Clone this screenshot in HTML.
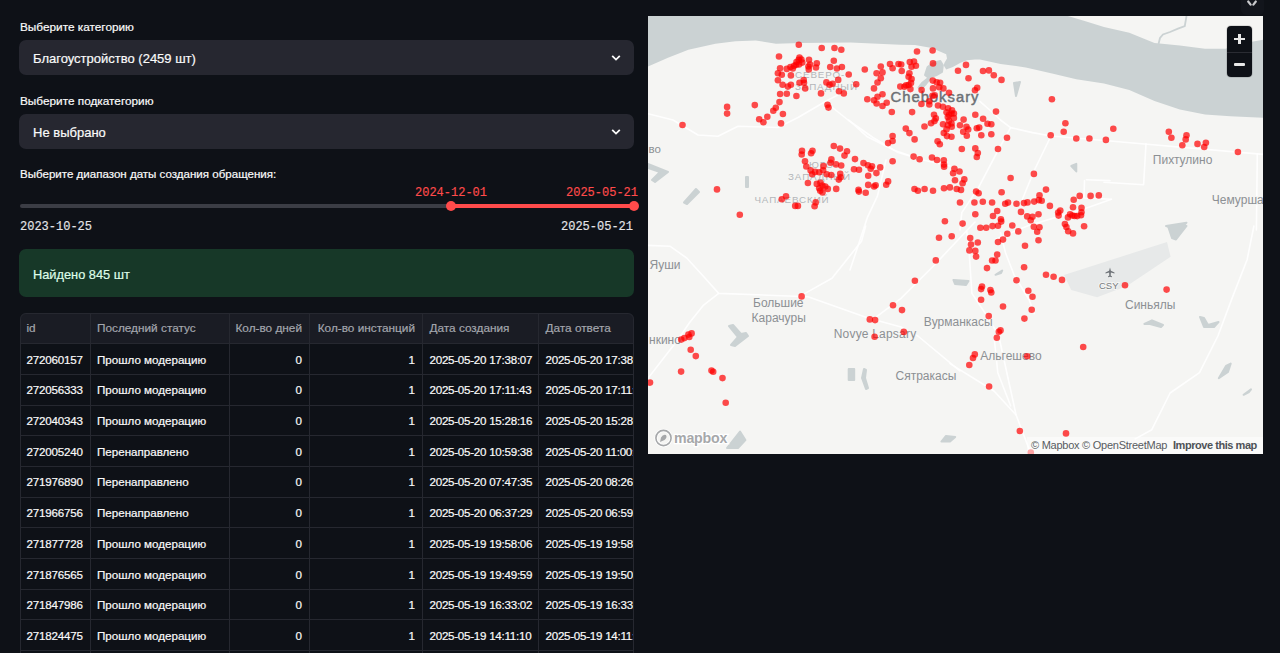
<!DOCTYPE html>
<html><head><meta charset="utf-8">
<style>
html,body{margin:0;padding:0;width:1280px;height:653px;overflow:hidden;background:#0e1117;}
body{position:relative;font-family:"Liberation Sans",sans-serif;color:#fafafa;}
.lbl,.sel .t,.ok .t,.td,.th{-webkit-text-stroke:0.2px currentColor;}
.abs{position:absolute;white-space:nowrap;}
.lbl{font-size:11.8px;line-height:14px;color:#fafafa;}
.sel{position:absolute;left:19px;width:615px;height:35px;background:#262730;border-radius:7px;}
.sel .t{position:absolute;left:14px;top:1px;line-height:35px;font-size:13px;color:#fafafa;}
.sel svg{position:absolute;left:591.8px;top:14px;}
.mono{font-family:"Liberation Mono",monospace;font-size:12px;line-height:14px;-webkit-text-stroke:0.15px currentColor;}
.ok{position:absolute;left:19px;top:249px;width:615px;height:48px;background:#173828;border-radius:7px;}
.ok .t{position:absolute;left:14px;top:2px;line-height:48px;font-size:12.8px;color:#dffde9;}
.tbl{position:absolute;left:19.5px;top:312.5px;width:614px;height:360px;border-radius:6px;overflow:hidden;background:#0e1117;box-shadow:inset 0 0 0 1px #262830;}
.th{font-size:11.8px;line-height:31px;color:#a3a6ad;}
.td{font-size:11.6px;line-height:31px;color:#fafafa;}
.map{position:absolute;left:648px;top:16px;width:615px;height:438px;background:#f4f4f2;overflow:hidden;}
</style></head><body>
<div class="abs lbl" style="left:20px;top:20px">Выберите категорию</div>
<div class="sel" style="top:40px"><div class="t abs">Благоустройство (2459 шт)</div>
<svg width="10" height="8" viewBox="0 0 10 8"><path d="M1.2 1.8 L5 5.6 L8.8 1.8" stroke="#fafafa" stroke-width="1.8" fill="none"/></svg></div>
<div class="abs lbl" style="left:20px;top:94px">Выберите подкатегорию</div>
<div class="sel" style="top:114px"><div class="t abs">Не выбрано</div>
<svg width="10" height="8" viewBox="0 0 10 8"><path d="M1.2 1.8 L5 5.6 L8.8 1.8" stroke="#fafafa" stroke-width="1.8" fill="none"/></svg></div>
<div class="abs lbl" style="left:20px;top:167px;font-size:11.55px">Выберите диапазон даты создания обращения:</div>

<div class="abs" style="left:20px;top:204px;width:614px;height:4px;background:#3b3d45;border-radius:2px"></div>
<div class="abs" style="left:451px;top:204px;width:183px;height:4px;background:#ff4b4b"></div>
<div class="abs" style="left:445.5px;top:200.7px;width:10.5px;height:10.5px;border-radius:50%;background:#ff4b4b"></div>
<div class="abs" style="left:628.9px;top:200.7px;width:10.5px;height:10.5px;border-radius:50%;background:#ff4b4b"></div>
<div class="abs mono" style="left:415px;top:186px;color:#ff4b4b">2024-12-01</div>
<div class="abs mono" style="left:566px;top:186px;color:#ff4b4b">2025-05-21</div>
<div class="abs mono" style="left:20px;top:220px;color:#e4e4e8">2023-10-25</div>
<div class="abs mono" style="left:561px;top:220px;color:#e4e4e8">2025-05-21</div>

<div class="ok"><div class="t abs">Найдено 845 шт</div></div>

<div class="abs" style="left:1241px;top:-4px;width:23px;height:19px;background:#12151c;border-radius:5px"></div>
<svg class="abs" style="left:1246px;top:0" width="12" height="7" viewBox="0 0 12 7"><path d="M2.2 1.5 L4.6 4.6 M9.8 1.5 L7.4 4.6" stroke="#c9cacd" stroke-width="2.2" stroke-linecap="round"/></svg>
<div class="tbl">
<div class="abs" style="left:0;top:0;width:620px;height:31.1px;background:#1a1c24"></div>
<div class="abs" style="left:70.0px;top:0;width:1px;height:400px;background:#262830"></div>
<div class="abs" style="left:209.0px;top:0;width:1px;height:400px;background:#262830"></div>
<div class="abs" style="left:289.5px;top:0;width:1px;height:400px;background:#262830"></div>
<div class="abs" style="left:402.5px;top:0;width:1px;height:400px;background:#262830"></div>
<div class="abs" style="left:518.5px;top:0;width:1px;height:400px;background:#262830"></div>
<div class="abs" style="left:0;top:30.6px;width:620px;height:1px;background:#262830"></div>
<div class="abs" style="left:0;top:61.3px;width:620px;height:1px;background:#262830"></div>
<div class="abs" style="left:0;top:92.0px;width:620px;height:1px;background:#262830"></div>
<div class="abs" style="left:0;top:122.7px;width:620px;height:1px;background:#262830"></div>
<div class="abs" style="left:0;top:153.4px;width:620px;height:1px;background:#262830"></div>
<div class="abs" style="left:0;top:184.1px;width:620px;height:1px;background:#262830"></div>
<div class="abs" style="left:0;top:214.8px;width:620px;height:1px;background:#262830"></div>
<div class="abs" style="left:0;top:245.5px;width:620px;height:1px;background:#262830"></div>
<div class="abs" style="left:0;top:276.2px;width:620px;height:1px;background:#262830"></div>
<div class="abs" style="left:0;top:306.9px;width:620px;height:1px;background:#262830"></div>
<div class="abs" style="left:0;top:337.6px;width:620px;height:1px;background:#262830"></div>
<div class="abs th" style="left:7.0px;top:0.0px">id</div>
<div class="abs th" style="left:77.5px;top:0.0px">Последний статус</div>
<div class="abs th" style="left:209.5px;width:73.0px;text-align:right;top:0.0px">Кол-во дней</div>
<div class="abs th" style="left:290.0px;width:105.5px;text-align:right;top:0.0px">Кол-во инстанций</div>
<div class="abs th" style="left:410.0px;top:0.0px">Дата создания</div>
<div class="abs th" style="left:526.0px;top:0.0px">Дата ответа</div>
<div class="abs td" style="left:7.0px;top:31.1px;letter-spacing:-0.2px">272060157</div>
<div class="abs td" style="left:77.5px;top:31.1px">Прошло модерацию</div>
<div class="abs td" style="left:209.5px;width:73.0px;text-align:right;top:31.1px">0</div>
<div class="abs td" style="left:290.0px;width:105.5px;text-align:right;top:31.1px">1</div>
<div class="abs td" style="left:410.0px;top:31.1px;letter-spacing:-0.26px">2025-05-20 17:38:07</div>
<div class="abs td" style="left:526.0px;top:31.1px;letter-spacing:-0.26px">2025-05-20 17:38:09</div>
<div class="abs td" style="left:7.0px;top:61.8px;letter-spacing:-0.2px">272056333</div>
<div class="abs td" style="left:77.5px;top:61.8px">Прошло модерацию</div>
<div class="abs td" style="left:209.5px;width:73.0px;text-align:right;top:61.8px">0</div>
<div class="abs td" style="left:290.0px;width:105.5px;text-align:right;top:61.8px">1</div>
<div class="abs td" style="left:410.0px;top:61.8px;letter-spacing:-0.26px">2025-05-20 17:11:43</div>
<div class="abs td" style="left:526.0px;top:61.8px;letter-spacing:-0.26px">2025-05-20 17:11:45</div>
<div class="abs td" style="left:7.0px;top:92.5px;letter-spacing:-0.2px">272040343</div>
<div class="abs td" style="left:77.5px;top:92.5px">Прошло модерацию</div>
<div class="abs td" style="left:209.5px;width:73.0px;text-align:right;top:92.5px">0</div>
<div class="abs td" style="left:290.0px;width:105.5px;text-align:right;top:92.5px">1</div>
<div class="abs td" style="left:410.0px;top:92.5px;letter-spacing:-0.26px">2025-05-20 15:28:16</div>
<div class="abs td" style="left:526.0px;top:92.5px;letter-spacing:-0.26px">2025-05-20 15:28:18</div>
<div class="abs td" style="left:7.0px;top:123.2px;letter-spacing:-0.2px">272005240</div>
<div class="abs td" style="left:77.5px;top:123.2px">Перенаправлено</div>
<div class="abs td" style="left:209.5px;width:73.0px;text-align:right;top:123.2px">0</div>
<div class="abs td" style="left:290.0px;width:105.5px;text-align:right;top:123.2px">1</div>
<div class="abs td" style="left:410.0px;top:123.2px;letter-spacing:-0.26px">2025-05-20 10:59:38</div>
<div class="abs td" style="left:526.0px;top:123.2px;letter-spacing:-0.26px">2025-05-20 11:00:12</div>
<div class="abs td" style="left:7.0px;top:153.9px;letter-spacing:-0.2px">271976890</div>
<div class="abs td" style="left:77.5px;top:153.9px">Перенаправлено</div>
<div class="abs td" style="left:209.5px;width:73.0px;text-align:right;top:153.9px">0</div>
<div class="abs td" style="left:290.0px;width:105.5px;text-align:right;top:153.9px">1</div>
<div class="abs td" style="left:410.0px;top:153.9px;letter-spacing:-0.26px">2025-05-20 07:47:35</div>
<div class="abs td" style="left:526.0px;top:153.9px;letter-spacing:-0.26px">2025-05-20 08:26:40</div>
<div class="abs td" style="left:7.0px;top:184.6px;letter-spacing:-0.2px">271966756</div>
<div class="abs td" style="left:77.5px;top:184.6px">Перенаправлено</div>
<div class="abs td" style="left:209.5px;width:73.0px;text-align:right;top:184.6px">0</div>
<div class="abs td" style="left:290.0px;width:105.5px;text-align:right;top:184.6px">1</div>
<div class="abs td" style="left:410.0px;top:184.6px;letter-spacing:-0.26px">2025-05-20 06:37:29</div>
<div class="abs td" style="left:526.0px;top:184.6px;letter-spacing:-0.26px">2025-05-20 06:59:11</div>
<div class="abs td" style="left:7.0px;top:215.3px;letter-spacing:-0.2px">271877728</div>
<div class="abs td" style="left:77.5px;top:215.3px">Прошло модерацию</div>
<div class="abs td" style="left:209.5px;width:73.0px;text-align:right;top:215.3px">0</div>
<div class="abs td" style="left:290.0px;width:105.5px;text-align:right;top:215.3px">1</div>
<div class="abs td" style="left:410.0px;top:215.3px;letter-spacing:-0.26px">2025-05-19 19:58:06</div>
<div class="abs td" style="left:526.0px;top:215.3px;letter-spacing:-0.26px">2025-05-19 19:58:08</div>
<div class="abs td" style="left:7.0px;top:246.0px;letter-spacing:-0.2px">271876565</div>
<div class="abs td" style="left:77.5px;top:246.0px">Прошло модерацию</div>
<div class="abs td" style="left:209.5px;width:73.0px;text-align:right;top:246.0px">0</div>
<div class="abs td" style="left:290.0px;width:105.5px;text-align:right;top:246.0px">1</div>
<div class="abs td" style="left:410.0px;top:246.0px;letter-spacing:-0.26px">2025-05-19 19:49:59</div>
<div class="abs td" style="left:526.0px;top:246.0px;letter-spacing:-0.26px">2025-05-19 19:50:01</div>
<div class="abs td" style="left:7.0px;top:276.7px;letter-spacing:-0.2px">271847986</div>
<div class="abs td" style="left:77.5px;top:276.7px">Прошло модерацию</div>
<div class="abs td" style="left:209.5px;width:73.0px;text-align:right;top:276.7px">0</div>
<div class="abs td" style="left:290.0px;width:105.5px;text-align:right;top:276.7px">1</div>
<div class="abs td" style="left:410.0px;top:276.7px;letter-spacing:-0.26px">2025-05-19 16:33:02</div>
<div class="abs td" style="left:526.0px;top:276.7px;letter-spacing:-0.26px">2025-05-19 16:33:04</div>
<div class="abs td" style="left:7.0px;top:307.4px;letter-spacing:-0.2px">271824475</div>
<div class="abs td" style="left:77.5px;top:307.4px">Прошло модерацию</div>
<div class="abs td" style="left:209.5px;width:73.0px;text-align:right;top:307.4px">0</div>
<div class="abs td" style="left:290.0px;width:105.5px;text-align:right;top:307.4px">1</div>
<div class="abs td" style="left:410.0px;top:307.4px;letter-spacing:-0.26px">2025-05-19 14:11:10</div>
<div class="abs td" style="left:526.0px;top:307.4px;letter-spacing:-0.26px">2025-05-19 14:11:12</div>
<div class="abs td" style="left:7.0px;top:338.1px;letter-spacing:-0.2px">271811021</div>
<div class="abs td" style="left:77.5px;top:338.1px">Прошло модерацию</div>
<div class="abs td" style="left:209.5px;width:73.0px;text-align:right;top:338.1px">0</div>
<div class="abs td" style="left:290.0px;width:105.5px;text-align:right;top:338.1px">1</div>
<div class="abs td" style="left:410.0px;top:338.1px;letter-spacing:-0.26px">2025-05-19 12:01:10</div>
<div class="abs td" style="left:526.0px;top:338.1px;letter-spacing:-0.26px">2025-05-19 12:01:12</div>
<div class="abs" style="left:0;top:0;width:614px;height:360px;box-sizing:border-box;border:1px solid #262830;border-radius:6px"></div>
</div>
<div class="map" id="map"><svg class="abs" style="left:0;top:0" width="615" height="438" viewBox="648 16 615 438">
<rect x="648" y="16" width="615" height="438" fill="#f5f5f3"/>
<polygon points="1064,275 1167,242 1170.6,256.8 1126.5,286.2 1097,297.2 1071.3,289.9" fill="#e7e9e9"/>
<polygon points="648,16 1067.9,16 1084.7,21 1104,27 1129.3,32.8 1154.5,43 1179.8,45.5 1205,48.8 1225.3,48.8 1250.5,42 1264,39.6 1264,117.9 1230.3,116.2 1205,114.5 1179.8,109.5 1154.5,101 1129.3,90 1104,83.4 1076.3,79.2 1051,73.2 1025.8,67.4 1000.5,64 980,59.5 975,59.4 967,60.2 960.5,62.7 952.9,67 946.2,69.5 943.6,65.3 944.5,62.7 947,58.5 946.2,54.3 931.8,48 915,45 900,44.8 850.5,42.6 800,43 776,43.8 755.8,40.4 735.6,41.3 715.4,43.8 688.4,49.7 668,57.8 648,66.5" fill="#cbd2d3"/>
<polygon points="940.3,61 942.8,65.3 942,72 936,75.4 929,77.5 922,83 918.5,87.5 920.5,89.5 926,84 930,79 925,75 927.6,67 933.5,62.7" fill="#cbd2d3" stroke="#cbd2d3" stroke-width="2" stroke-linejoin="round"/>
<polygon points="648,164 668,172 655,182 652,180 660,172 648,168" fill="#cbd2d3" stroke="#cbd2d3" stroke-width="2" stroke-linejoin="round"/>
<polygon points="684,202.5 696,189 699,192 687,204" fill="#cbd2d3" stroke="#cbd2d3" stroke-width="2" stroke-linejoin="round"/>
<polygon points="746,177 748,177 748,187 746,187" fill="#cbd2d3" stroke="#cbd2d3" stroke-width="2" stroke-linejoin="round"/>
<polygon points="1014,83 1020,82 1016,96" fill="#cbd2d3" stroke="#cbd2d3" stroke-width="2" stroke-linejoin="round"/>
<polygon points="1071.3,166 1076.3,163.8 1076.3,171.4" fill="#cbd2d3" stroke="#cbd2d3" stroke-width="2" stroke-linejoin="round"/>
<polygon points="1166,226 1186.5,222.7 1180,230" fill="#cbd2d3" stroke="#cbd2d3" stroke-width="2" stroke-linejoin="round"/>
<polygon points="1168,226 1186.5,226 1176,239.5 1172,238" fill="#cbd2d3" stroke="#cbd2d3" stroke-width="2" stroke-linejoin="round"/>
<polygon points="953.4,280 968.5,281 966,285 955,284" fill="#cbd2d3" stroke="#cbd2d3" stroke-width="2" stroke-linejoin="round"/>
<polygon points="995.5,274.8 1002.2,270.6 1001,273" fill="#cbd2d3" stroke="#cbd2d3" stroke-width="2" stroke-linejoin="round"/>
<polygon points="1200,317 1204,318 1208,325 1218.5,322 1214,327 1204,327" fill="#cbd2d3" stroke="#cbd2d3" stroke-width="2" stroke-linejoin="round"/>
<polygon points="1144.4,324 1152,320.3 1163,325 1161,327 1150,324" fill="#cbd2d3" stroke="#cbd2d3" stroke-width="2" stroke-linejoin="round"/>
<polygon points="729,326 733,325 741,334 746,333 748,336 735,346 731,345 738,337" fill="#cbd2d3" stroke="#cbd2d3" stroke-width="2" stroke-linejoin="round"/>
<polygon points="727,448 740,431.5 745.4,440 738,448" fill="#cbd2d3" stroke="#cbd2d3" stroke-width="2" stroke-linejoin="round"/>
<polygon points="848.7,369 854.2,369 854.2,380 848.7,380" fill="#cbd2d3" stroke="#cbd2d3" stroke-width="2" stroke-linejoin="round"/>
<polygon points="864,369 862,378 866,389 868,388 865,378 866,370" fill="#cbd2d3" stroke="#cbd2d3" stroke-width="2" stroke-linejoin="round"/>
<polygon points="941.4,441.6 946,436 955.2,437 950,441.6" fill="#cbd2d3" stroke="#cbd2d3" stroke-width="2" stroke-linejoin="round"/>
<polygon points="1218.8,378.2 1226,366 1230.7,363.6 1228,372" fill="#cbd2d3" stroke="#cbd2d3" stroke-width="2" stroke-linejoin="round"/>
<polygon points="1243.6,394.8 1251,389.3 1249,392" fill="#cbd2d3" stroke="#cbd2d3" stroke-width="2" stroke-linejoin="round"/>
<polyline points="1158.5,44 1160,38 1163,34.5 1170,32 1178,28.6 1184.8,26 1186.5,16" fill="none" stroke="#cbd2d3" stroke-width="1.8"/>
<polyline points="648,113.75 673,120 698,135 718,136.25 738,126.25 778,127.5 798,117.5 828,100 838,95" fill="none" stroke="#ffffff" stroke-width="1.6" stroke-opacity="0.9" stroke-linejoin="round" stroke-linecap="round"/>
<polyline points="828,104 848,120 873,137.5 898,152.5 923,160 950,166" fill="none" stroke="#ffffff" stroke-width="1.6" stroke-opacity="0.9" stroke-linejoin="round" stroke-linecap="round"/>
<polyline points="886,160 877.5,195.8 867.3,217.7 860,240 850,270" fill="none" stroke="#ffffff" stroke-width="1.6" stroke-opacity="0.9" stroke-linejoin="round" stroke-linecap="round"/>
<polyline points="848.8,120 867.3,136.8 894.3,150.3 909.5,155.4" fill="none" stroke="#ffffff" stroke-width="1.6" stroke-opacity="0.9" stroke-linejoin="round" stroke-linecap="round"/>
<polyline points="979.9,101.3 992,112 1000.5,120 1010.6,127.6 1032.5,132.6 1051,136 1110,141 1264,154.5" fill="none" stroke="#ffffff" stroke-width="1.6" stroke-opacity="0.9" stroke-linejoin="round" stroke-linecap="round"/>
<polyline points="1010.6,127.6 997.2,152 978.6,187.4 961.8,212.6 960,230" fill="none" stroke="#ffffff" stroke-width="1.6" stroke-opacity="0.9" stroke-linejoin="round" stroke-linecap="round"/>
<polyline points="1051,136 1034.2,170.5 1022.4,199.2" fill="none" stroke="#ffffff" stroke-width="1.6" stroke-opacity="0.9" stroke-linejoin="round" stroke-linecap="round"/>
<polyline points="1146,143.6 1143.6,184.8 1104,182.3" fill="none" stroke="#ffffff" stroke-width="1.6" stroke-opacity="0.9" stroke-linejoin="round" stroke-linecap="round"/>
<polyline points="1086.4,179.8 1110,180.6" fill="none" stroke="#ffffff" stroke-width="1.6" stroke-opacity="0.9" stroke-linejoin="round" stroke-linecap="round"/>
<polyline points="1084.5,180.5 1084,198 1111.4,199.2" fill="none" stroke="#ffffff" stroke-width="1.6" stroke-opacity="0.9" stroke-linejoin="round" stroke-linecap="round"/>
<polyline points="995.7,239.2 1028.8,225.4 1083.9,208.9 1111.4,199.2" fill="none" stroke="#ffffff" stroke-width="1.6" stroke-opacity="0.9" stroke-linejoin="round" stroke-linecap="round"/>
<polyline points="1257.3,153.7 1256.4,230" fill="none" stroke="#ffffff" stroke-width="1.6" stroke-opacity="0.9" stroke-linejoin="round" stroke-linecap="round"/>
<polyline points="648,245.4 669.9,246.2 686.7,258 703.6,276.5 718.7,293.4 808,296.7 867.3,317.8 901,327 917.9,336 959.8,370.9" fill="none" stroke="#ffffff" stroke-width="1.6" stroke-opacity="0.9" stroke-linejoin="round" stroke-linecap="round"/>
<polyline points="718.7,293.4 703.6,305.1 690,322 676.5,341.5 648,378.2" fill="none" stroke="#ffffff" stroke-width="1.6" stroke-opacity="0.9" stroke-linejoin="round" stroke-linecap="round"/>
<polyline points="865.7,226 861.5,241.2 832,278.2 805,293.4 800,298.4" fill="none" stroke="#ffffff" stroke-width="1.6" stroke-opacity="0.9" stroke-linejoin="round" stroke-linecap="round"/>
<polyline points="874,318.6 901,298.4 934.7,264.7 960,237.8 975,222" fill="none" stroke="#ffffff" stroke-width="1.6" stroke-opacity="0.9" stroke-linejoin="round" stroke-linecap="round"/>
<polyline points="966.8,231 969.4,256.3 971.9,293.4 988.7,318.6 998.8,336 1016.1,415 1030.8,453.6" fill="none" stroke="#ffffff" stroke-width="1.6" stroke-opacity="0.9" stroke-linejoin="round" stroke-linecap="round"/>
<polyline points="1000.5,232.7 1005.6,253 1014,274.8 1029.2,300 1034.2,313.6" fill="none" stroke="#ffffff" stroke-width="1.6" stroke-opacity="0.9" stroke-linejoin="round" stroke-linecap="round"/>
<polyline points="950,363.6 994,391 1016.1,415" fill="none" stroke="#ffffff" stroke-width="1.6" stroke-opacity="0.9" stroke-linejoin="round" stroke-linecap="round"/>
<polyline points="994,336 997.8,372.7 1010.6,405.8" fill="none" stroke="#ffffff" stroke-width="1.6" stroke-opacity="0.9" stroke-linejoin="round" stroke-linecap="round"/>
<polyline points="1253.9,226 1247.1,259.7 1232,298.4 1217.9,336 1199.5,372.7 1170.1,393 1151.8,429.7 1135.2,438.9" fill="none" stroke="#ffffff" stroke-width="1.6" stroke-opacity="0.9" stroke-linejoin="round" stroke-linecap="round"/>
<text x="795" y="78" font-family="Liberation Sans" font-size="9.8" fill="#b3b6b9" font-weight="normal" letter-spacing="0.9" stroke="#f5f5f3" stroke-width="2" paint-order="stroke">СЕВЕРО-</text>
<text x="795" y="89.6" font-family="Liberation Sans" font-size="9.8" fill="#b3b6b9" font-weight="normal" letter-spacing="0.9" stroke="#f5f5f3" stroke-width="2" paint-order="stroke">ЗАПАДНЫЙ</text>
<text x="809" y="168" font-family="Liberation Sans" font-size="9.8" fill="#b3b6b9" font-weight="normal" letter-spacing="0.9" stroke="#f5f5f3" stroke-width="2" paint-order="stroke">ЮГО-</text>
<text x="788" y="179.8" font-family="Liberation Sans" font-size="9.8" fill="#b3b6b9" font-weight="normal" letter-spacing="0.9" stroke="#f5f5f3" stroke-width="2" paint-order="stroke">ЗАПАДНЫЙ</text>
<text x="754.4" y="202.6" font-family="Liberation Sans" font-size="9.8" fill="#b3b6b9" font-weight="normal" letter-spacing="0.9" stroke="#f5f5f3" stroke-width="2" paint-order="stroke">ЧАПАЕВСКИЙ</text>
<text x="648.5" y="153" font-family="Liberation Sans" font-size="11.5" fill="#8c9094" font-weight="normal" letter-spacing="0" stroke="#f5f5f3" stroke-width="2" paint-order="stroke">во</text>
<text x="649.5" y="269" font-family="Liberation Sans" font-size="12" fill="#8c9094" font-weight="normal" letter-spacing="0" stroke="#f5f5f3" stroke-width="2" paint-order="stroke">Яуши</text>
<text x="753" y="306.8" font-family="Liberation Sans" font-size="12" fill="#8c9094" font-weight="normal" letter-spacing="0" stroke="#f5f5f3" stroke-width="2" paint-order="stroke">Большие</text>
<text x="751.6" y="322" font-family="Liberation Sans" font-size="12" fill="#8c9094" font-weight="normal" letter-spacing="0" stroke="#f5f5f3" stroke-width="2" paint-order="stroke">Карачуры</text>
<text x="833.7" y="337.5" font-family="Liberation Sans" font-size="12" fill="#8c9094" font-weight="normal" letter-spacing="0.2" stroke="#f5f5f3" stroke-width="2" paint-order="stroke">Novye Lapsary</text>
<text x="923.8" y="326.4" font-family="Liberation Sans" font-size="12" fill="#8c9094" font-weight="normal" letter-spacing="0" stroke="#f5f5f3" stroke-width="2" paint-order="stroke">Вурманкасы</text>
<text x="980.3" y="360" font-family="Liberation Sans" font-size="12" fill="#8c9094" font-weight="normal" letter-spacing="0" stroke="#f5f5f3" stroke-width="2" paint-order="stroke">Альгешево</text>
<text x="895.5" y="380" font-family="Liberation Sans" font-size="12" fill="#8c9094" font-weight="normal" letter-spacing="0" stroke="#f5f5f3" stroke-width="2" paint-order="stroke">Сятракасы</text>
<text x="1125" y="309.4" font-family="Liberation Sans" font-size="12" fill="#8c9094" font-weight="normal" letter-spacing="0" stroke="#f5f5f3" stroke-width="2" paint-order="stroke">Синьялы</text>
<text x="1152.8" y="163.8" font-family="Liberation Sans" font-size="12" fill="#8c9094" font-weight="normal" letter-spacing="0" stroke="#f5f5f3" stroke-width="2" paint-order="stroke">Пихтулино</text>
<text x="1211.8" y="204" font-family="Liberation Sans" font-size="12" fill="#8c9094" font-weight="normal" letter-spacing="0" stroke="#f5f5f3" stroke-width="2" paint-order="stroke">Чемурша</text>
<text x="649" y="344" font-family="Liberation Sans" font-size="12" fill="#8c9094" font-weight="normal" letter-spacing="0" stroke="#f5f5f3" stroke-width="2" paint-order="stroke">нкино</text>
<text x="1099" y="289" font-family="Liberation Sans" font-size="9.5" fill="#777b80" font-weight="normal" letter-spacing="0" stroke="#f5f5f3" stroke-width="2" paint-order="stroke">CSY</text>
<text x="890.5" y="101.6" font-family="Liberation Sans" font-size="14.8" fill="#6c7075" letter-spacing="1" stroke="#6c7075" stroke-width="0.45">Cheboksary</text>
<path d="M1110 267.5 L1110.9 270.8 L1114.5 272.5 L1114.5 273.4 L1110.9 272.6 L1110.7 275.6 L1112 276.6 L1112 277.2 L1110 276.7 L1108 277.2 L1108 276.6 L1109.3 275.6 L1109.1 272.6 L1105.5 273.4 L1105.5 272.5 L1109.1 270.8 Z" fill="#6f7378"/>
<circle cx="798.8" cy="44.7" r="3.3" fill="#ff0000" fill-opacity="0.7"/>
<circle cx="779.0" cy="56.5" r="3.3" fill="#ff0000" fill-opacity="0.7"/>
<circle cx="798.7" cy="59.8" r="3.3" fill="#ff0000" fill-opacity="0.7"/>
<circle cx="796.2" cy="64.8" r="3.3" fill="#ff0000" fill-opacity="0.7"/>
<circle cx="792.8" cy="68.5" r="3.3" fill="#ff0000" fill-opacity="0.7"/>
<circle cx="802.3" cy="62.6" r="3.3" fill="#ff0000" fill-opacity="0.7"/>
<circle cx="780.1" cy="68.2" r="3.3" fill="#ff0000" fill-opacity="0.7"/>
<circle cx="786.8" cy="68.9" r="3.3" fill="#ff0000" fill-opacity="0.7"/>
<circle cx="777.9" cy="73.2" r="3.3" fill="#ff0000" fill-opacity="0.7"/>
<circle cx="781.8" cy="74.8" r="3.3" fill="#ff0000" fill-opacity="0.7"/>
<circle cx="790.9" cy="75.4" r="3.3" fill="#ff0000" fill-opacity="0.7"/>
<circle cx="777.9" cy="80.3" r="3.3" fill="#ff0000" fill-opacity="0.7"/>
<circle cx="782.6" cy="84.7" r="3.3" fill="#ff0000" fill-opacity="0.7"/>
<circle cx="790.9" cy="84.8" r="3.3" fill="#ff0000" fill-opacity="0.7"/>
<circle cx="787.9" cy="86.6" r="3.3" fill="#ff0000" fill-opacity="0.7"/>
<circle cx="803.7" cy="80.0" r="3.3" fill="#ff0000" fill-opacity="0.7"/>
<circle cx="805.2" cy="88.4" r="3.3" fill="#ff0000" fill-opacity="0.7"/>
<circle cx="799.5" cy="82.7" r="3.3" fill="#ff0000" fill-opacity="0.7"/>
<circle cx="780.1" cy="94.0" r="3.3" fill="#ff0000" fill-opacity="0.7"/>
<circle cx="786.8" cy="93.8" r="3.3" fill="#ff0000" fill-opacity="0.7"/>
<circle cx="796.4" cy="96.0" r="3.3" fill="#ff0000" fill-opacity="0.7"/>
<circle cx="779.5" cy="102.1" r="3.3" fill="#ff0000" fill-opacity="0.7"/>
<circle cx="754.8" cy="105.1" r="3.3" fill="#ff0000" fill-opacity="0.7"/>
<circle cx="727.1" cy="106.9" r="3.3" fill="#ff0000" fill-opacity="0.7"/>
<circle cx="727.1" cy="113.6" r="3.3" fill="#ff0000" fill-opacity="0.7"/>
<circle cx="775.8" cy="107.8" r="3.3" fill="#ff0000" fill-opacity="0.7"/>
<circle cx="773.3" cy="110.8" r="3.3" fill="#ff0000" fill-opacity="0.7"/>
<circle cx="767.3" cy="116.8" r="3.3" fill="#ff0000" fill-opacity="0.7"/>
<circle cx="782.9" cy="114.0" r="3.3" fill="#ff0000" fill-opacity="0.7"/>
<circle cx="759.2" cy="119.2" r="3.3" fill="#ff0000" fill-opacity="0.7"/>
<circle cx="763.4" cy="122.2" r="3.3" fill="#ff0000" fill-opacity="0.7"/>
<circle cx="781.0" cy="123.4" r="3.3" fill="#ff0000" fill-opacity="0.7"/>
<circle cx="682.5" cy="125.0" r="3.3" fill="#ff0000" fill-opacity="0.7"/>
<circle cx="821.7" cy="48.0" r="3.3" fill="#ff0000" fill-opacity="0.7"/>
<circle cx="834.5" cy="48.0" r="3.3" fill="#ff0000" fill-opacity="0.7"/>
<circle cx="841.3" cy="49.8" r="3.3" fill="#ff0000" fill-opacity="0.7"/>
<circle cx="799.5" cy="57.5" r="3.3" fill="#ff0000" fill-opacity="0.7"/>
<circle cx="809.0" cy="59.7" r="3.3" fill="#ff0000" fill-opacity="0.7"/>
<circle cx="808.4" cy="66.5" r="3.3" fill="#ff0000" fill-opacity="0.7"/>
<circle cx="816.8" cy="63.2" r="3.3" fill="#ff0000" fill-opacity="0.7"/>
<circle cx="816.0" cy="67.5" r="3.3" fill="#ff0000" fill-opacity="0.7"/>
<circle cx="833.8" cy="60.7" r="3.3" fill="#ff0000" fill-opacity="0.7"/>
<circle cx="830.2" cy="67.0" r="3.3" fill="#ff0000" fill-opacity="0.7"/>
<circle cx="841.9" cy="67.0" r="3.3" fill="#ff0000" fill-opacity="0.7"/>
<circle cx="836.9" cy="68.5" r="3.3" fill="#ff0000" fill-opacity="0.7"/>
<circle cx="864.8" cy="69.5" r="3.3" fill="#ff0000" fill-opacity="0.7"/>
<circle cx="848.7" cy="74.5" r="3.3" fill="#ff0000" fill-opacity="0.7"/>
<circle cx="804.0" cy="82.8" r="3.3" fill="#ff0000" fill-opacity="0.7"/>
<circle cx="826.4" cy="82.4" r="3.3" fill="#ff0000" fill-opacity="0.7"/>
<circle cx="832.6" cy="83.8" r="3.3" fill="#ff0000" fill-opacity="0.7"/>
<circle cx="838.2" cy="79.9" r="3.3" fill="#ff0000" fill-opacity="0.7"/>
<circle cx="856.2" cy="84.2" r="3.3" fill="#ff0000" fill-opacity="0.7"/>
<circle cx="821.0" cy="93.4" r="3.3" fill="#ff0000" fill-opacity="0.7"/>
<circle cx="839.0" cy="91.2" r="3.3" fill="#ff0000" fill-opacity="0.7"/>
<circle cx="843.8" cy="93.4" r="3.3" fill="#ff0000" fill-opacity="0.7"/>
<circle cx="827.5" cy="104.7" r="3.3" fill="#ff0000" fill-opacity="0.7"/>
<circle cx="828.5" cy="107.6" r="3.3" fill="#ff0000" fill-opacity="0.7"/>
<circle cx="880.8" cy="66.5" r="3.3" fill="#ff0000" fill-opacity="0.7"/>
<circle cx="876.6" cy="73.2" r="3.3" fill="#ff0000" fill-opacity="0.7"/>
<circle cx="882.5" cy="72.4" r="3.3" fill="#ff0000" fill-opacity="0.7"/>
<circle cx="880.8" cy="78.3" r="3.3" fill="#ff0000" fill-opacity="0.7"/>
<circle cx="877.5" cy="82.5" r="3.3" fill="#ff0000" fill-opacity="0.7"/>
<circle cx="874.0" cy="88.4" r="3.3" fill="#ff0000" fill-opacity="0.7"/>
<circle cx="890.0" cy="64.0" r="3.3" fill="#ff0000" fill-opacity="0.7"/>
<circle cx="898.5" cy="64.0" r="3.3" fill="#ff0000" fill-opacity="0.7"/>
<circle cx="892.6" cy="68.2" r="3.3" fill="#ff0000" fill-opacity="0.7"/>
<circle cx="901.7" cy="71.0" r="3.3" fill="#ff0000" fill-opacity="0.7"/>
<circle cx="909.8" cy="62.1" r="3.3" fill="#ff0000" fill-opacity="0.7"/>
<circle cx="914.0" cy="61.5" r="3.3" fill="#ff0000" fill-opacity="0.7"/>
<circle cx="911.5" cy="66.8" r="3.3" fill="#ff0000" fill-opacity="0.7"/>
<circle cx="917.0" cy="51.5" r="3.3" fill="#ff0000" fill-opacity="0.7"/>
<circle cx="932.6" cy="50.5" r="3.3" fill="#ff0000" fill-opacity="0.7"/>
<circle cx="933.0" cy="63.4" r="3.3" fill="#ff0000" fill-opacity="0.7"/>
<circle cx="909.4" cy="73.2" r="3.3" fill="#ff0000" fill-opacity="0.7"/>
<circle cx="911.6" cy="79.1" r="3.3" fill="#ff0000" fill-opacity="0.7"/>
<circle cx="908.6" cy="85.0" r="3.3" fill="#ff0000" fill-opacity="0.7"/>
<circle cx="904.4" cy="86.7" r="3.3" fill="#ff0000" fill-opacity="0.7"/>
<circle cx="900.3" cy="86.6" r="3.3" fill="#ff0000" fill-opacity="0.7"/>
<circle cx="910.4" cy="89.1" r="3.3" fill="#ff0000" fill-opacity="0.7"/>
<circle cx="882.5" cy="94.3" r="3.3" fill="#ff0000" fill-opacity="0.7"/>
<circle cx="877.5" cy="96.8" r="3.3" fill="#ff0000" fill-opacity="0.7"/>
<circle cx="867.3" cy="99.3" r="3.3" fill="#ff0000" fill-opacity="0.7"/>
<circle cx="874.0" cy="100.2" r="3.3" fill="#ff0000" fill-opacity="0.7"/>
<circle cx="876.6" cy="103.5" r="3.3" fill="#ff0000" fill-opacity="0.7"/>
<circle cx="882.5" cy="106.0" r="3.3" fill="#ff0000" fill-opacity="0.7"/>
<circle cx="886.7" cy="102.7" r="3.3" fill="#ff0000" fill-opacity="0.7"/>
<circle cx="891.8" cy="112.0" r="3.3" fill="#ff0000" fill-opacity="0.7"/>
<circle cx="912.1" cy="112.1" r="3.3" fill="#ff0000" fill-opacity="0.7"/>
<circle cx="921.6" cy="90.1" r="3.3" fill="#ff0000" fill-opacity="0.7"/>
<circle cx="921.4" cy="104.0" r="3.3" fill="#ff0000" fill-opacity="0.7"/>
<circle cx="929.3" cy="104.5" r="3.3" fill="#ff0000" fill-opacity="0.7"/>
<circle cx="958.0" cy="70.7" r="3.3" fill="#ff0000" fill-opacity="0.7"/>
<circle cx="932.8" cy="80.6" r="3.3" fill="#ff0000" fill-opacity="0.7"/>
<circle cx="940.1" cy="82.7" r="3.3" fill="#ff0000" fill-opacity="0.7"/>
<circle cx="943.4" cy="88.4" r="3.3" fill="#ff0000" fill-opacity="0.7"/>
<circle cx="933.0" cy="88.4" r="3.3" fill="#ff0000" fill-opacity="0.7"/>
<circle cx="934.7" cy="95.2" r="3.3" fill="#ff0000" fill-opacity="0.7"/>
<circle cx="966.0" cy="64.9" r="3.3" fill="#ff0000" fill-opacity="0.7"/>
<circle cx="968.5" cy="78.2" r="3.3" fill="#ff0000" fill-opacity="0.7"/>
<circle cx="983.0" cy="71.0" r="3.3" fill="#ff0000" fill-opacity="0.7"/>
<circle cx="988.9" cy="70.4" r="3.3" fill="#ff0000" fill-opacity="0.7"/>
<circle cx="993.8" cy="75.2" r="3.3" fill="#ff0000" fill-opacity="0.7"/>
<circle cx="1001.5" cy="79.9" r="3.3" fill="#ff0000" fill-opacity="0.7"/>
<circle cx="977.2" cy="87.7" r="3.3" fill="#ff0000" fill-opacity="0.7"/>
<circle cx="975.0" cy="90.2" r="3.3" fill="#ff0000" fill-opacity="0.7"/>
<circle cx="1051.9" cy="99.3" r="3.3" fill="#ff0000" fill-opacity="0.7"/>
<circle cx="996.0" cy="111.6" r="3.3" fill="#ff0000" fill-opacity="0.7"/>
<circle cx="975.3" cy="114.8" r="3.3" fill="#ff0000" fill-opacity="0.7"/>
<circle cx="963.6" cy="119.6" r="3.3" fill="#ff0000" fill-opacity="0.7"/>
<circle cx="983.1" cy="118.7" r="3.3" fill="#ff0000" fill-opacity="0.7"/>
<circle cx="987.5" cy="123.7" r="3.3" fill="#ff0000" fill-opacity="0.7"/>
<circle cx="991.3" cy="124.2" r="3.3" fill="#ff0000" fill-opacity="0.7"/>
<circle cx="1065.4" cy="123.2" r="3.3" fill="#ff0000" fill-opacity="0.7"/>
<circle cx="717.0" cy="189.4" r="3.3" fill="#ff0000" fill-opacity="0.7"/>
<circle cx="739.8" cy="214.8" r="3.3" fill="#ff0000" fill-opacity="0.7"/>
<circle cx="802.0" cy="150.7" r="3.3" fill="#ff0000" fill-opacity="0.7"/>
<circle cx="801.7" cy="154.5" r="3.3" fill="#ff0000" fill-opacity="0.7"/>
<circle cx="805.0" cy="161.3" r="3.3" fill="#ff0000" fill-opacity="0.7"/>
<circle cx="806.3" cy="166.5" r="3.3" fill="#ff0000" fill-opacity="0.7"/>
<circle cx="807.9" cy="183.0" r="3.3" fill="#ff0000" fill-opacity="0.7"/>
<circle cx="786.0" cy="196.3" r="3.3" fill="#ff0000" fill-opacity="0.7"/>
<circle cx="781.8" cy="199.2" r="3.3" fill="#ff0000" fill-opacity="0.7"/>
<circle cx="795.2" cy="205.9" r="3.3" fill="#ff0000" fill-opacity="0.7"/>
<circle cx="797.9" cy="205.9" r="3.3" fill="#ff0000" fill-opacity="0.7"/>
<circle cx="811.1" cy="153.2" r="3.3" fill="#ff0000" fill-opacity="0.7"/>
<circle cx="833.8" cy="146.0" r="3.3" fill="#ff0000" fill-opacity="0.7"/>
<circle cx="840.0" cy="148.6" r="3.3" fill="#ff0000" fill-opacity="0.7"/>
<circle cx="847.0" cy="151.3" r="3.3" fill="#ff0000" fill-opacity="0.7"/>
<circle cx="844.5" cy="155.6" r="3.3" fill="#ff0000" fill-opacity="0.7"/>
<circle cx="830.5" cy="162.8" r="3.3" fill="#ff0000" fill-opacity="0.7"/>
<circle cx="836.0" cy="164.4" r="3.3" fill="#ff0000" fill-opacity="0.7"/>
<circle cx="841.2" cy="165.5" r="3.3" fill="#ff0000" fill-opacity="0.7"/>
<circle cx="823.1" cy="170.2" r="3.3" fill="#ff0000" fill-opacity="0.7"/>
<circle cx="812.2" cy="174.3" r="3.3" fill="#ff0000" fill-opacity="0.7"/>
<circle cx="815.1" cy="171.9" r="3.3" fill="#ff0000" fill-opacity="0.7"/>
<circle cx="826.7" cy="174.3" r="3.3" fill="#ff0000" fill-opacity="0.7"/>
<circle cx="831.2" cy="175.0" r="3.3" fill="#ff0000" fill-opacity="0.7"/>
<circle cx="840.2" cy="173.7" r="3.3" fill="#ff0000" fill-opacity="0.7"/>
<circle cx="838.8" cy="179.6" r="3.3" fill="#ff0000" fill-opacity="0.7"/>
<circle cx="816.8" cy="183.9" r="3.3" fill="#ff0000" fill-opacity="0.7"/>
<circle cx="822.4" cy="185.6" r="3.3" fill="#ff0000" fill-opacity="0.7"/>
<circle cx="825.3" cy="186.5" r="3.3" fill="#ff0000" fill-opacity="0.7"/>
<circle cx="820.2" cy="190.7" r="3.3" fill="#ff0000" fill-opacity="0.7"/>
<circle cx="827.8" cy="188.9" r="3.3" fill="#ff0000" fill-opacity="0.7"/>
<circle cx="822.5" cy="192.4" r="3.3" fill="#ff0000" fill-opacity="0.7"/>
<circle cx="836.2" cy="188.9" r="3.3" fill="#ff0000" fill-opacity="0.7"/>
<circle cx="815.7" cy="202.4" r="3.3" fill="#ff0000" fill-opacity="0.7"/>
<circle cx="814.6" cy="206.2" r="3.3" fill="#ff0000" fill-opacity="0.7"/>
<circle cx="855.0" cy="159.1" r="3.3" fill="#ff0000" fill-opacity="0.7"/>
<circle cx="863.5" cy="163.1" r="3.3" fill="#ff0000" fill-opacity="0.7"/>
<circle cx="867.9" cy="165.2" r="3.3" fill="#ff0000" fill-opacity="0.7"/>
<circle cx="872.0" cy="166.2" r="3.3" fill="#ff0000" fill-opacity="0.7"/>
<circle cx="870.7" cy="168.8" r="3.3" fill="#ff0000" fill-opacity="0.7"/>
<circle cx="880.2" cy="167.4" r="3.3" fill="#ff0000" fill-opacity="0.7"/>
<circle cx="854.0" cy="169.2" r="3.3" fill="#ff0000" fill-opacity="0.7"/>
<circle cx="859.0" cy="169.8" r="3.3" fill="#ff0000" fill-opacity="0.7"/>
<circle cx="868.2" cy="175.8" r="3.3" fill="#ff0000" fill-opacity="0.7"/>
<circle cx="876.4" cy="173.1" r="3.3" fill="#ff0000" fill-opacity="0.7"/>
<circle cx="868.2" cy="184.9" r="3.3" fill="#ff0000" fill-opacity="0.7"/>
<circle cx="875.6" cy="185.2" r="3.3" fill="#ff0000" fill-opacity="0.7"/>
<circle cx="874.1" cy="186.5" r="3.3" fill="#ff0000" fill-opacity="0.7"/>
<circle cx="858.5" cy="189.9" r="3.3" fill="#ff0000" fill-opacity="0.7"/>
<circle cx="858.9" cy="191.6" r="3.3" fill="#ff0000" fill-opacity="0.7"/>
<circle cx="865.7" cy="192.7" r="3.3" fill="#ff0000" fill-opacity="0.7"/>
<circle cx="886.2" cy="184.7" r="3.3" fill="#ff0000" fill-opacity="0.7"/>
<circle cx="888.1" cy="181.4" r="3.3" fill="#ff0000" fill-opacity="0.7"/>
<circle cx="892.6" cy="136.0" r="3.3" fill="#ff0000" fill-opacity="0.7"/>
<circle cx="888.1" cy="143.1" r="3.3" fill="#ff0000" fill-opacity="0.7"/>
<circle cx="892.6" cy="141.0" r="3.3" fill="#ff0000" fill-opacity="0.7"/>
<circle cx="892.6" cy="161.3" r="3.3" fill="#ff0000" fill-opacity="0.7"/>
<circle cx="905.8" cy="128.6" r="3.3" fill="#ff0000" fill-opacity="0.7"/>
<circle cx="909.4" cy="133.1" r="3.3" fill="#ff0000" fill-opacity="0.7"/>
<circle cx="914.6" cy="139.4" r="3.3" fill="#ff0000" fill-opacity="0.7"/>
<circle cx="924.5" cy="126.5" r="3.3" fill="#ff0000" fill-opacity="0.7"/>
<circle cx="931.0" cy="123.3" r="3.3" fill="#ff0000" fill-opacity="0.7"/>
<circle cx="934.5" cy="121.1" r="3.3" fill="#ff0000" fill-opacity="0.7"/>
<circle cx="943.0" cy="124.3" r="3.3" fill="#ff0000" fill-opacity="0.7"/>
<circle cx="947.9" cy="125.3" r="3.3" fill="#ff0000" fill-opacity="0.7"/>
<circle cx="951.5" cy="123.5" r="3.3" fill="#ff0000" fill-opacity="0.7"/>
<circle cx="943.8" cy="133.0" r="3.3" fill="#ff0000" fill-opacity="0.7"/>
<circle cx="947.0" cy="136.1" r="3.3" fill="#ff0000" fill-opacity="0.7"/>
<circle cx="951.5" cy="136.8" r="3.3" fill="#ff0000" fill-opacity="0.7"/>
<circle cx="937.6" cy="141.3" r="3.3" fill="#ff0000" fill-opacity="0.7"/>
<circle cx="939.8" cy="144.2" r="3.3" fill="#ff0000" fill-opacity="0.7"/>
<circle cx="913.6" cy="156.6" r="3.3" fill="#ff0000" fill-opacity="0.7"/>
<circle cx="919.6" cy="159.2" r="3.3" fill="#ff0000" fill-opacity="0.7"/>
<circle cx="932.0" cy="157.5" r="3.3" fill="#ff0000" fill-opacity="0.7"/>
<circle cx="937.0" cy="160.0" r="3.3" fill="#ff0000" fill-opacity="0.7"/>
<circle cx="943.8" cy="160.2" r="3.3" fill="#ff0000" fill-opacity="0.7"/>
<circle cx="944.0" cy="164.6" r="3.3" fill="#ff0000" fill-opacity="0.7"/>
<circle cx="954.4" cy="168.7" r="3.3" fill="#ff0000" fill-opacity="0.7"/>
<circle cx="953.1" cy="173.3" r="3.3" fill="#ff0000" fill-opacity="0.7"/>
<circle cx="959.5" cy="171.5" r="3.3" fill="#ff0000" fill-opacity="0.7"/>
<circle cx="955.0" cy="180.2" r="3.3" fill="#ff0000" fill-opacity="0.7"/>
<circle cx="914.5" cy="189.0" r="3.3" fill="#ff0000" fill-opacity="0.7"/>
<circle cx="917.9" cy="190.7" r="3.3" fill="#ff0000" fill-opacity="0.7"/>
<circle cx="924.6" cy="189.0" r="3.3" fill="#ff0000" fill-opacity="0.7"/>
<circle cx="933.0" cy="190.7" r="3.3" fill="#ff0000" fill-opacity="0.7"/>
<circle cx="944.0" cy="188.2" r="3.3" fill="#ff0000" fill-opacity="0.7"/>
<circle cx="949.9" cy="187.4" r="3.3" fill="#ff0000" fill-opacity="0.7"/>
<circle cx="956.7" cy="189.0" r="3.3" fill="#ff0000" fill-opacity="0.7"/>
<circle cx="944.9" cy="221.2" r="3.3" fill="#ff0000" fill-opacity="0.7"/>
<circle cx="960.0" cy="202.5" r="3.3" fill="#ff0000" fill-opacity="0.7"/>
<circle cx="951.7" cy="126.7" r="3.3" fill="#ff0000" fill-opacity="0.7"/>
<circle cx="960.0" cy="125.3" r="3.3" fill="#ff0000" fill-opacity="0.7"/>
<circle cx="966.5" cy="126.8" r="3.3" fill="#ff0000" fill-opacity="0.7"/>
<circle cx="968.2" cy="129.6" r="3.3" fill="#ff0000" fill-opacity="0.7"/>
<circle cx="966.8" cy="135.8" r="3.3" fill="#ff0000" fill-opacity="0.7"/>
<circle cx="963.2" cy="131.8" r="3.3" fill="#ff0000" fill-opacity="0.7"/>
<circle cx="976.8" cy="128.3" r="3.3" fill="#ff0000" fill-opacity="0.7"/>
<circle cx="979.2" cy="127.6" r="3.3" fill="#ff0000" fill-opacity="0.7"/>
<circle cx="981.3" cy="135.3" r="3.3" fill="#ff0000" fill-opacity="0.7"/>
<circle cx="991.3" cy="134.3" r="3.3" fill="#ff0000" fill-opacity="0.7"/>
<circle cx="1007.0" cy="137.8" r="3.3" fill="#ff0000" fill-opacity="0.7"/>
<circle cx="961.8" cy="149.0" r="3.3" fill="#ff0000" fill-opacity="0.7"/>
<circle cx="975.3" cy="148.4" r="3.3" fill="#ff0000" fill-opacity="0.7"/>
<circle cx="977.8" cy="153.1" r="3.3" fill="#ff0000" fill-opacity="0.7"/>
<circle cx="976.8" cy="157.0" r="3.3" fill="#ff0000" fill-opacity="0.7"/>
<circle cx="998.0" cy="149.0" r="3.3" fill="#ff0000" fill-opacity="0.7"/>
<circle cx="1063.7" cy="131.8" r="3.3" fill="#ff0000" fill-opacity="0.7"/>
<circle cx="1050.7" cy="135.2" r="3.3" fill="#ff0000" fill-opacity="0.7"/>
<circle cx="1076.3" cy="138.5" r="3.3" fill="#ff0000" fill-opacity="0.7"/>
<circle cx="1089.4" cy="138.5" r="3.3" fill="#ff0000" fill-opacity="0.7"/>
<circle cx="1105.9" cy="139.9" r="3.3" fill="#ff0000" fill-opacity="0.7"/>
<circle cx="964.3" cy="179.4" r="3.3" fill="#ff0000" fill-opacity="0.7"/>
<circle cx="962.6" cy="183.2" r="3.3" fill="#ff0000" fill-opacity="0.7"/>
<circle cx="961.0" cy="189.9" r="3.3" fill="#ff0000" fill-opacity="0.7"/>
<circle cx="976.1" cy="191.6" r="3.3" fill="#ff0000" fill-opacity="0.7"/>
<circle cx="978.6" cy="193.2" r="3.3" fill="#ff0000" fill-opacity="0.7"/>
<circle cx="1010.6" cy="178.0" r="3.3" fill="#ff0000" fill-opacity="0.7"/>
<circle cx="1033.9" cy="173.9" r="3.3" fill="#ff0000" fill-opacity="0.7"/>
<circle cx="1001.6" cy="192.3" r="3.3" fill="#ff0000" fill-opacity="0.7"/>
<circle cx="1046.0" cy="189.6" r="3.3" fill="#ff0000" fill-opacity="0.7"/>
<circle cx="1039.5" cy="195.2" r="3.3" fill="#ff0000" fill-opacity="0.7"/>
<circle cx="974.4" cy="202.5" r="3.3" fill="#ff0000" fill-opacity="0.7"/>
<circle cx="982.8" cy="201.7" r="3.3" fill="#ff0000" fill-opacity="0.7"/>
<circle cx="992.1" cy="202.5" r="3.3" fill="#ff0000" fill-opacity="0.7"/>
<circle cx="1005.2" cy="203.7" r="3.3" fill="#ff0000" fill-opacity="0.7"/>
<circle cx="1008.0" cy="202.6" r="3.3" fill="#ff0000" fill-opacity="0.7"/>
<circle cx="1016.5" cy="203.7" r="3.3" fill="#ff0000" fill-opacity="0.7"/>
<circle cx="1024.0" cy="203.1" r="3.3" fill="#ff0000" fill-opacity="0.7"/>
<circle cx="1027.5" cy="202.4" r="3.3" fill="#ff0000" fill-opacity="0.7"/>
<circle cx="1034.2" cy="201.6" r="3.3" fill="#ff0000" fill-opacity="0.7"/>
<circle cx="1038.7" cy="200.1" r="3.3" fill="#ff0000" fill-opacity="0.7"/>
<circle cx="1041.7" cy="200.8" r="3.3" fill="#ff0000" fill-opacity="0.7"/>
<circle cx="1049.9" cy="205.9" r="3.3" fill="#ff0000" fill-opacity="0.7"/>
<circle cx="975.3" cy="214.3" r="3.3" fill="#ff0000" fill-opacity="0.7"/>
<circle cx="993.0" cy="216.0" r="3.3" fill="#ff0000" fill-opacity="0.7"/>
<circle cx="997.2" cy="211.0" r="3.3" fill="#ff0000" fill-opacity="0.7"/>
<circle cx="1000.9" cy="219.3" r="3.3" fill="#ff0000" fill-opacity="0.7"/>
<circle cx="1021.0" cy="211.9" r="3.3" fill="#ff0000" fill-opacity="0.7"/>
<circle cx="1027.2" cy="216.4" r="3.3" fill="#ff0000" fill-opacity="0.7"/>
<circle cx="1032.5" cy="216.8" r="3.3" fill="#ff0000" fill-opacity="0.7"/>
<circle cx="1030.7" cy="220.3" r="3.3" fill="#ff0000" fill-opacity="0.7"/>
<circle cx="1038.5" cy="214.3" r="3.3" fill="#ff0000" fill-opacity="0.7"/>
<circle cx="962.6" cy="223.6" r="3.3" fill="#ff0000" fill-opacity="0.7"/>
<circle cx="980.3" cy="227.8" r="3.3" fill="#ff0000" fill-opacity="0.7"/>
<circle cx="992.5" cy="226.1" r="3.3" fill="#ff0000" fill-opacity="0.7"/>
<circle cx="998.0" cy="225.7" r="3.3" fill="#ff0000" fill-opacity="0.7"/>
<circle cx="1012.3" cy="225.5" r="3.3" fill="#ff0000" fill-opacity="0.7"/>
<circle cx="1033.8" cy="226.7" r="3.3" fill="#ff0000" fill-opacity="0.7"/>
<circle cx="1039.5" cy="227.3" r="3.3" fill="#ff0000" fill-opacity="0.7"/>
<circle cx="1073.7" cy="199.8" r="3.3" fill="#ff0000" fill-opacity="0.7"/>
<circle cx="1079.7" cy="195.9" r="3.3" fill="#ff0000" fill-opacity="0.7"/>
<circle cx="1090.6" cy="195.9" r="3.3" fill="#ff0000" fill-opacity="0.7"/>
<circle cx="1098.8" cy="195.4" r="3.3" fill="#ff0000" fill-opacity="0.7"/>
<circle cx="1060.3" cy="210.5" r="3.3" fill="#ff0000" fill-opacity="0.7"/>
<circle cx="1058.6" cy="215.6" r="3.3" fill="#ff0000" fill-opacity="0.7"/>
<circle cx="1073.0" cy="207.3" r="3.3" fill="#ff0000" fill-opacity="0.7"/>
<circle cx="1081.5" cy="207.9" r="3.3" fill="#ff0000" fill-opacity="0.7"/>
<circle cx="1081.5" cy="212.2" r="3.3" fill="#ff0000" fill-opacity="0.7"/>
<circle cx="1070.1" cy="214.3" r="3.3" fill="#ff0000" fill-opacity="0.7"/>
<circle cx="1074.6" cy="216.0" r="3.3" fill="#ff0000" fill-opacity="0.7"/>
<circle cx="1081.0" cy="215.3" r="3.3" fill="#ff0000" fill-opacity="0.7"/>
<circle cx="1066.4" cy="227.0" r="3.3" fill="#ff0000" fill-opacity="0.7"/>
<circle cx="1084.1" cy="226.2" r="3.3" fill="#ff0000" fill-opacity="0.7"/>
<circle cx="1113.3" cy="128.8" r="3.3" fill="#ff0000" fill-opacity="0.7"/>
<circle cx="1168.8" cy="131.8" r="3.3" fill="#ff0000" fill-opacity="0.7"/>
<circle cx="1171.4" cy="137.7" r="3.3" fill="#ff0000" fill-opacity="0.7"/>
<circle cx="1186.5" cy="135.2" r="3.3" fill="#ff0000" fill-opacity="0.7"/>
<circle cx="1185.7" cy="139.4" r="3.3" fill="#ff0000" fill-opacity="0.7"/>
<circle cx="1182.3" cy="145.3" r="3.3" fill="#ff0000" fill-opacity="0.7"/>
<circle cx="1197.5" cy="143.9" r="3.3" fill="#ff0000" fill-opacity="0.7"/>
<circle cx="1205.9" cy="142.7" r="3.3" fill="#ff0000" fill-opacity="0.7"/>
<circle cx="1204.2" cy="147.0" r="3.3" fill="#ff0000" fill-opacity="0.7"/>
<circle cx="1237.9" cy="152.0" r="3.3" fill="#ff0000" fill-opacity="0.7"/>
<circle cx="801.6" cy="296.4" r="3.3" fill="#ff0000" fill-opacity="0.7"/>
<circle cx="691.6" cy="333.4" r="3.3" fill="#ff0000" fill-opacity="0.7"/>
<circle cx="688.4" cy="334.6" r="3.3" fill="#ff0000" fill-opacity="0.7"/>
<circle cx="939.0" cy="237.7" r="3.3" fill="#ff0000" fill-opacity="0.7"/>
<circle cx="951.7" cy="236.3" r="3.3" fill="#ff0000" fill-opacity="0.7"/>
<circle cx="935.8" cy="260.4" r="3.3" fill="#ff0000" fill-opacity="0.7"/>
<circle cx="914.9" cy="280.7" r="3.3" fill="#ff0000" fill-opacity="0.7"/>
<circle cx="893.0" cy="305.2" r="3.3" fill="#ff0000" fill-opacity="0.7"/>
<circle cx="902.0" cy="310.1" r="3.3" fill="#ff0000" fill-opacity="0.7"/>
<circle cx="869.8" cy="319.4" r="3.3" fill="#ff0000" fill-opacity="0.7"/>
<circle cx="875.1" cy="320.1" r="3.3" fill="#ff0000" fill-opacity="0.7"/>
<circle cx="903.8" cy="331.9" r="3.3" fill="#ff0000" fill-opacity="0.7"/>
<circle cx="874.6" cy="336.8" r="3.3" fill="#ff0000" fill-opacity="0.7"/>
<circle cx="970.2" cy="238.1" r="3.3" fill="#ff0000" fill-opacity="0.7"/>
<circle cx="971.0" cy="244.5" r="3.3" fill="#ff0000" fill-opacity="0.7"/>
<circle cx="977.8" cy="242.5" r="3.3" fill="#ff0000" fill-opacity="0.7"/>
<circle cx="969.4" cy="250.4" r="3.3" fill="#ff0000" fill-opacity="0.7"/>
<circle cx="975.3" cy="250.9" r="3.3" fill="#ff0000" fill-opacity="0.7"/>
<circle cx="976.1" cy="256.6" r="3.3" fill="#ff0000" fill-opacity="0.7"/>
<circle cx="986.2" cy="227.7" r="3.3" fill="#ff0000" fill-opacity="0.7"/>
<circle cx="1018.3" cy="231.4" r="3.3" fill="#ff0000" fill-opacity="0.7"/>
<circle cx="1007.3" cy="233.8" r="3.3" fill="#ff0000" fill-opacity="0.7"/>
<circle cx="998.0" cy="242.0" r="3.3" fill="#ff0000" fill-opacity="0.7"/>
<circle cx="1003.0" cy="239.6" r="3.3" fill="#ff0000" fill-opacity="0.7"/>
<circle cx="997.2" cy="254.6" r="3.3" fill="#ff0000" fill-opacity="0.7"/>
<circle cx="992.1" cy="260.5" r="3.3" fill="#ff0000" fill-opacity="0.7"/>
<circle cx="995.5" cy="260.5" r="3.3" fill="#ff0000" fill-opacity="0.7"/>
<circle cx="987.0" cy="268.1" r="3.3" fill="#ff0000" fill-opacity="0.7"/>
<circle cx="1025.0" cy="245.7" r="3.3" fill="#ff0000" fill-opacity="0.7"/>
<circle cx="1037.2" cy="231.7" r="3.3" fill="#ff0000" fill-opacity="0.7"/>
<circle cx="1038.5" cy="240.2" r="3.3" fill="#ff0000" fill-opacity="0.7"/>
<circle cx="1068.2" cy="231.2" r="3.3" fill="#ff0000" fill-opacity="0.7"/>
<circle cx="1073.0" cy="233.4" r="3.3" fill="#ff0000" fill-opacity="0.7"/>
<circle cx="1024.1" cy="267.3" r="3.3" fill="#ff0000" fill-opacity="0.7"/>
<circle cx="1046.0" cy="274.8" r="3.3" fill="#ff0000" fill-opacity="0.7"/>
<circle cx="1053.6" cy="276.8" r="3.3" fill="#ff0000" fill-opacity="0.7"/>
<circle cx="1062.0" cy="279.9" r="3.3" fill="#ff0000" fill-opacity="0.7"/>
<circle cx="1016.5" cy="280.2" r="3.3" fill="#ff0000" fill-opacity="0.7"/>
<circle cx="982.0" cy="286.6" r="3.3" fill="#ff0000" fill-opacity="0.7"/>
<circle cx="981.1" cy="289.1" r="3.3" fill="#ff0000" fill-opacity="0.7"/>
<circle cx="990.4" cy="290.0" r="3.3" fill="#ff0000" fill-opacity="0.7"/>
<circle cx="991.3" cy="292.5" r="3.3" fill="#ff0000" fill-opacity="0.7"/>
<circle cx="1028.3" cy="290.8" r="3.3" fill="#ff0000" fill-opacity="0.7"/>
<circle cx="1032.5" cy="296.7" r="3.3" fill="#ff0000" fill-opacity="0.7"/>
<circle cx="981.1" cy="299.8" r="3.3" fill="#ff0000" fill-opacity="0.7"/>
<circle cx="1003.0" cy="306.5" r="3.3" fill="#ff0000" fill-opacity="0.7"/>
<circle cx="1031.7" cy="309.8" r="3.3" fill="#ff0000" fill-opacity="0.7"/>
<circle cx="988.7" cy="316.1" r="3.3" fill="#ff0000" fill-opacity="0.7"/>
<circle cx="1024.4" cy="318.6" r="3.3" fill="#ff0000" fill-opacity="0.7"/>
<circle cx="998.8" cy="331.8" r="3.3" fill="#ff0000" fill-opacity="0.7"/>
<circle cx="1000.5" cy="330.4" r="3.3" fill="#ff0000" fill-opacity="0.7"/>
<circle cx="1125.0" cy="285.3" r="3.3" fill="#ff0000" fill-opacity="0.7"/>
<circle cx="1166.6" cy="289.6" r="3.3" fill="#ff0000" fill-opacity="0.7"/>
<circle cx="681.2" cy="339.6" r="3.3" fill="#ff0000" fill-opacity="0.7"/>
<circle cx="684.4" cy="338.1" r="3.3" fill="#ff0000" fill-opacity="0.7"/>
<circle cx="689.3" cy="337.0" r="3.3" fill="#ff0000" fill-opacity="0.7"/>
<circle cx="690.7" cy="349.8" r="3.3" fill="#ff0000" fill-opacity="0.7"/>
<circle cx="695.8" cy="356.1" r="3.3" fill="#ff0000" fill-opacity="0.7"/>
<circle cx="681.1" cy="371.6" r="3.3" fill="#ff0000" fill-opacity="0.7"/>
<circle cx="711.5" cy="370.6" r="3.3" fill="#ff0000" fill-opacity="0.7"/>
<circle cx="713.2" cy="371.8" r="3.3" fill="#ff0000" fill-opacity="0.7"/>
<circle cx="722.5" cy="378.1" r="3.3" fill="#ff0000" fill-opacity="0.7"/>
<circle cx="725.7" cy="402.7" r="3.3" fill="#ff0000" fill-opacity="0.7"/>
<circle cx="650.0" cy="382.6" r="3.3" fill="#ff0000" fill-opacity="0.7"/>
<circle cx="996.8" cy="337.8" r="3.3" fill="#ff0000" fill-opacity="0.7"/>
<circle cx="974.8" cy="354.4" r="3.3" fill="#ff0000" fill-opacity="0.7"/>
<circle cx="973.0" cy="358.0" r="3.3" fill="#ff0000" fill-opacity="0.7"/>
<circle cx="969.3" cy="365.0" r="3.3" fill="#ff0000" fill-opacity="0.7"/>
<circle cx="1027.1" cy="356.2" r="3.3" fill="#ff0000" fill-opacity="0.7"/>
<circle cx="1083.2" cy="347.0" r="3.3" fill="#ff0000" fill-opacity="0.7"/>
<circle cx="989.1" cy="386.5" r="3.3" fill="#ff0000" fill-opacity="0.7"/>
<circle cx="1019.8" cy="431.0" r="3.3" fill="#ff0000" fill-opacity="0.7"/>
<circle cx="1066.0" cy="433.4" r="3.3" fill="#ff0000" fill-opacity="0.7"/>
<circle cx="1030.8" cy="452.6" r="3.3" fill="#ff0000" fill-opacity="0.7"/>
<circle cx="901.2" cy="64.5" r="3.3" fill="#ff0000" fill-opacity="0.7"/>
<circle cx="915.9" cy="65.7" r="3.3" fill="#ff0000" fill-opacity="0.7"/>
<circle cx="908.6" cy="76.7" r="3.3" fill="#ff0000" fill-opacity="0.7"/>
<circle cx="911.0" cy="82.9" r="3.3" fill="#ff0000" fill-opacity="0.7"/>
<circle cx="906.1" cy="85.3" r="3.3" fill="#ff0000" fill-opacity="0.7"/>
<circle cx="936.7" cy="82.3" r="3.3" fill="#ff0000" fill-opacity="0.7"/>
<circle cx="939.2" cy="87.2" r="3.3" fill="#ff0000" fill-opacity="0.7"/>
<circle cx="932.5" cy="95.7" r="3.3" fill="#ff0000" fill-opacity="0.7"/>
<circle cx="949.0" cy="92.7" r="3.3" fill="#ff0000" fill-opacity="0.7"/>
<circle cx="929.4" cy="101.2" r="3.3" fill="#ff0000" fill-opacity="0.7"/>
<circle cx="938.0" cy="105.5" r="3.3" fill="#ff0000" fill-opacity="0.7"/>
<circle cx="942.9" cy="106.8" r="3.3" fill="#ff0000" fill-opacity="0.7"/>
<circle cx="948.1" cy="108.3" r="3.3" fill="#ff0000" fill-opacity="0.7"/>
<circle cx="952.0" cy="110.4" r="3.3" fill="#ff0000" fill-opacity="0.7"/>
<circle cx="953.9" cy="113.5" r="3.3" fill="#ff0000" fill-opacity="0.7"/>
<circle cx="949.0" cy="114.7" r="3.3" fill="#ff0000" fill-opacity="0.7"/>
<circle cx="934.0" cy="114.7" r="3.3" fill="#ff0000" fill-opacity="0.7"/>
<circle cx="935.8" cy="118.4" r="3.3" fill="#ff0000" fill-opacity="0.7"/>
<circle cx="953.9" cy="118.1" r="3.3" fill="#ff0000" fill-opacity="0.7"/>
<circle cx="951.4" cy="113.5" r="3.3" fill="#ff0000" fill-opacity="0.7"/>
<circle cx="946.5" cy="112.2" r="3.3" fill="#ff0000" fill-opacity="0.7"/>
<circle cx="947.8" cy="117.1" r="3.3" fill="#ff0000" fill-opacity="0.7"/>
<circle cx="949.0" cy="120.8" r="3.3" fill="#ff0000" fill-opacity="0.7"/>
<circle cx="946.5" cy="129.4" r="3.3" fill="#ff0000" fill-opacity="0.7"/>
<circle cx="944.1" cy="166.8" r="3.3" fill="#ff0000" fill-opacity="0.7"/>
<circle cx="1001.2" cy="221.6" r="3.3" fill="#ff0000" fill-opacity="0.7"/>
<circle cx="1058.2" cy="212.5" r="3.3" fill="#ff0000" fill-opacity="0.7"/>
<circle cx="1072.3" cy="215.5" r="3.3" fill="#ff0000" fill-opacity="0.7"/>
<circle cx="1068.0" cy="217.4" r="3.3" fill="#ff0000" fill-opacity="0.7"/>
<circle cx="1077.2" cy="216.1" r="3.3" fill="#ff0000" fill-opacity="0.7"/>
<circle cx="1064.9" cy="224.1" r="3.3" fill="#ff0000" fill-opacity="0.7"/>
<circle cx="801.4" cy="59.6" r="3.3" fill="#ff0000" fill-opacity="0.7"/>
<circle cx="796.5" cy="62.0" r="3.3" fill="#ff0000" fill-opacity="0.7"/>
<circle cx="794.1" cy="65.7" r="3.3" fill="#ff0000" fill-opacity="0.7"/>
<circle cx="799.0" cy="64.5" r="3.3" fill="#ff0000" fill-opacity="0.7"/>
<circle cx="810.0" cy="64.5" r="3.3" fill="#ff0000" fill-opacity="0.7"/>
<circle cx="808.8" cy="69.4" r="3.3" fill="#ff0000" fill-opacity="0.7"/>
<circle cx="790.4" cy="67.0" r="3.3" fill="#ff0000" fill-opacity="0.7"/>
<circle cx="829.6" cy="84.7" r="3.3" fill="#ff0000" fill-opacity="0.7"/>
<circle cx="812.5" cy="150.8" r="3.3" fill="#ff0000" fill-opacity="0.7"/>
<circle cx="831.4" cy="159.4" r="3.3" fill="#ff0000" fill-opacity="0.7"/>
<circle cx="823.5" cy="166.1" r="3.3" fill="#ff0000" fill-opacity="0.7"/>
<circle cx="810.6" cy="170.4" r="3.3" fill="#ff0000" fill-opacity="0.7"/>
<circle cx="819.2" cy="172.3" r="3.3" fill="#ff0000" fill-opacity="0.7"/>
<circle cx="840.6" cy="177.2" r="3.3" fill="#ff0000" fill-opacity="0.7"/>
<circle cx="820.4" cy="182.7" r="3.3" fill="#ff0000" fill-opacity="0.7"/>
<circle cx="819.2" cy="188.2" r="3.3" fill="#ff0000" fill-opacity="0.7"/>
</svg>
<div class="abs" style="left:579px;top:10px;width:25px;height:51px;background:#0e1117;border-radius:4px;box-shadow:0 0 0 1px rgba(0,0,0,0.1)"></div>
<div class="abs" style="left:579px;top:35.5px;width:25px;height:1px;background:#2a2c33"></div>
<div class="abs" style="left:586px;top:21.7px;width:10.5px;height:2.6px;background:#e8e8e8"></div>
<div class="abs" style="left:590px;top:17.8px;width:2.6px;height:10.5px;background:#e8e8e8"></div>
<div class="abs" style="left:585.8px;top:47.2px;width:11px;height:2.8px;border-radius:1px;background:#e8e8e8"></div>
<svg class="abs" style="left:4px;top:412px" width="80" height="22" viewBox="0 0 80 22"><circle cx="11.5" cy="10" r="7.6" fill="none" stroke="#ffffff" stroke-width="3.2"/><circle cx="11.5" cy="10" r="7.6" fill="none" stroke="#a6a8aa" stroke-width="1.6"/><path d="M8 14 L9 9.5 Q11 6 14 7 Q15.5 9.5 12.5 12 Z" fill="#a6a8aa"/><text x="22" y="15" font-family="Liberation Sans" font-weight="bold" font-size="14.2" fill="#a6a8aa" stroke="#ffffff" stroke-width="2.4" paint-order="stroke" letter-spacing="-0.2">mapbox</text></svg>
<div class="abs" style="left:379px;top:421px;width:236px;height:17px;background:rgba(255,255,255,0.5)"></div>
<div class="abs" style="left:383px;top:421px;line-height:17px;font-size:11px;color:#585c61;letter-spacing:-0.25px">© Mapbox © OpenStreetMap <b style="margin-left:3px;color:#4e5257;letter-spacing:-0.45px">Improve this map</b></div></div>
</body></html>
